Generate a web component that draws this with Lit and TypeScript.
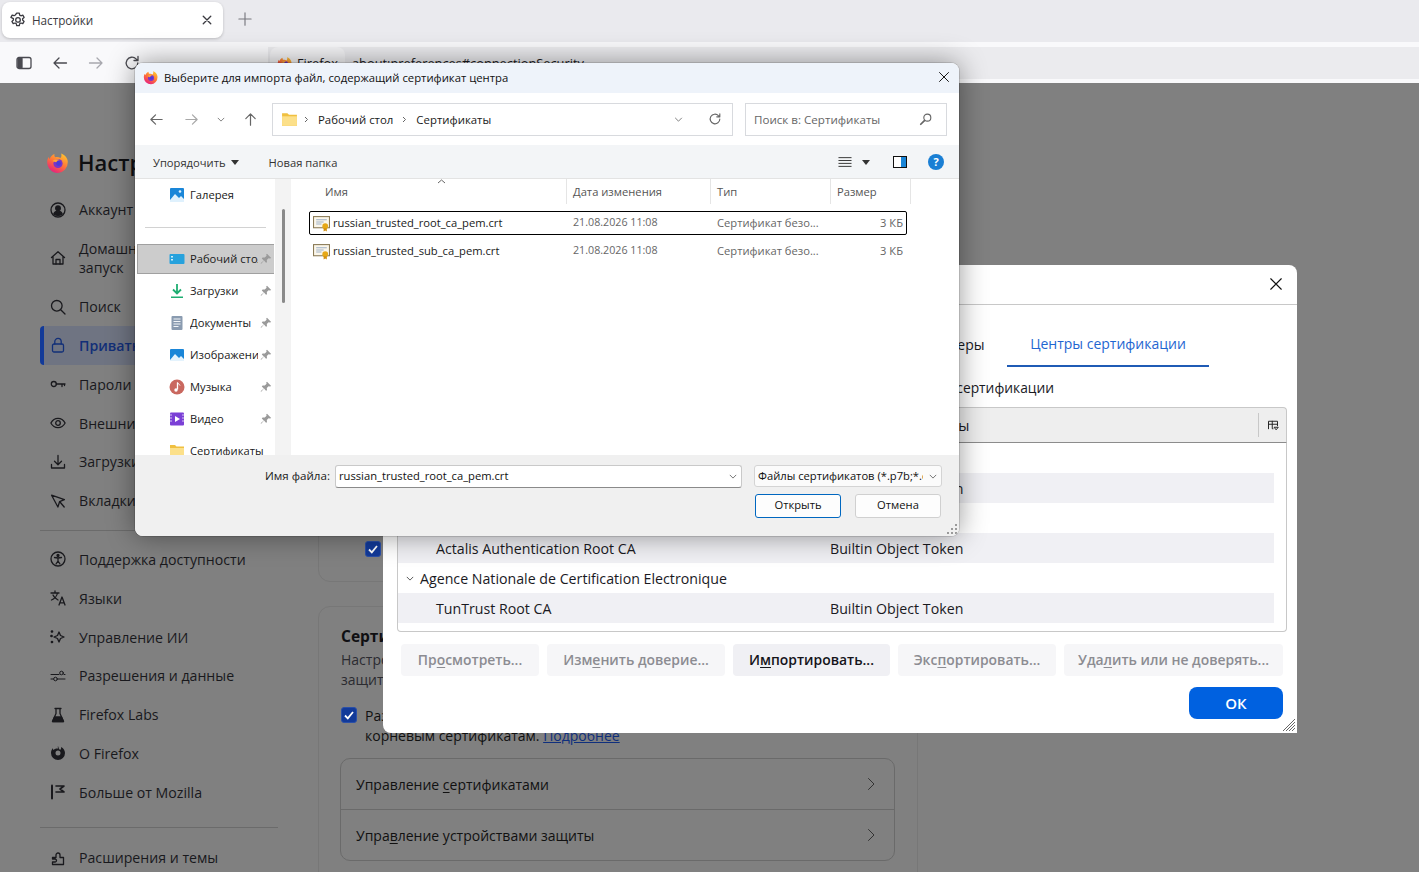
import { LitElement, html, css, svg } from "lit";
import { customElement } from "lit/decorators.js";

const ic = (body: unknown, cls = "i") =>
  html`<svg class=${cls} viewBox="0 0 16 16" fill="none" stroke="currentColor" stroke-width="1.3" stroke-linecap="round" stroke-linejoin="round">${body}</svg>`;

const fxLogo = (cls: string) => html`<svg class=${cls} viewBox="0 0 24 24">
  <defs>
    <linearGradient id="fxa" x1="0.8" y1="0" x2="0.2" y2="1"><stop offset="0" stop-color="#ffc62e"/><stop offset="0.5" stop-color="#ff7139"/><stop offset="1" stop-color="#e31587"/></linearGradient>
  </defs>
  <path fill="url(#fxa)" d="M12 23a10.8 10.8 0 0 1-10.8-11c0-2 .6-3.6 1.6-5 .1 1 .5 1.6 1 2 .6-2.400 2.400-4 4.700-5-.4 1.500 0 2.600 1 3.300 1.500-.5 3.500-.2 4.900.8 1-.8 1.300-2.500.8-4.600 3 1 6.600 4.300 6.600 8.500A10.800 10.800 0 0 1 12 23z"/>
  <circle cx="12" cy="13.500" r="4.600" fill="#7a35c8"/>
  <circle cx="12.500" cy="13.500" r="2.400" fill="#4a3bd8"/>
  <path fill="#ffa436" d="M6.500 11c2-2 5.500-2.500 7.500-1-1.800 0-3 .8-3.700 2.200-1.200-.4-2.800-.2-3.800-1.200z"/>
</svg>`;

const sideIcons: Record<string, unknown> = {
  account: svg`<circle cx="8" cy="8" r="7"/><circle cx="8" cy="6.300" r="2.300" fill="currentColor"/><path fill="currentColor" d="M3.800 12c.8-2 2.400-2.800 4.200-2.800s3.400.8 4.200 2.800c-2.200 1.800-6.200 1.800-8.400 0z"/>`,
  home: svg`<path d="M1.500 7.500 8 1.800l6.500 5.700M3 6.500V14h10V6.500"/><path d="M6 14V9.500h4V14"/>`,
  search: svg`<circle cx="6.800" cy="6.800" r="5.300"/><path d="m10.700 10.700 4.300 4.300"/>`,
  lock: svg`<rect x="2.500" y="7" width="11" height="8" rx="1.500"/><path d="M4.800 7V4.600a3.200 3.200 0 0 1 6.400 0V7"/>`,
  key: svg`<circle cx="3.800" cy="8" r="2.500"/><path d="M6.300 8H15M12 8v2.500M14.500 8v1.500"/>`,
  eye: svg`<path d="M.9 8C2.500 5 5 3.300 8 3.300S13.500 5 15.100 8c-1.600 3-4.100 4.700-7.100 4.700S2.500 11 .9 8z"/><circle cx="8" cy="8" r="2.300"/>`,
  download: svg`<path d="M8 1.500v9M4.500 7.200 8 10.700l3.500-3.500M1.500 10.500v3.500h13v-3.500"/>`,
  tabs: svg`<path d="M2 1.800 14.500 7l-5 1.800L7.500 14 2 1.800z" transform="rotate(-4 8 8)"/><path d="m10 9 4.200 5"/>`,
  access: svg`<circle cx="8" cy="8" r="7"/><circle cx="8" cy="4.500" r="1" fill="currentColor"/><path d="M4.500 6.500 8 7l3.500-.5M8 7v3l-2 3M8 10l2 3"/>`,
  lang: svg`<path d="M1 3h8M5 1v2M7.500 3C7 6 4 9 1.500 10M3 5c1 2.500 3 4 5 5"/><path d="m9 15 3-8 3 8M10 12.800h4"/>`,
  ai: svg`<path d="M9 3l1.500 3.500L14 8l-3.500 1.500L9 13 7.500 9.500 4 8l3.500-1.500z"/><circle cx="2" cy="2.500" r=".7" fill="currentColor"/><circle cx="1.500" cy="7" r=".7" fill="currentColor"/><circle cx="2" cy="13" r=".7" fill="currentColor"/>`,
  perm: svg`<path d="M1 6.500h8M14 6.500h1M1 11h2.500M8 11h7" stroke-width="1"/><circle cx="11.500" cy="5" r="1.800" stroke-width="1"/><circle cx="5.500" cy="11" r="1.800" stroke-width="1"/>`,
  labs: svg`<path d="M5 1.500h6M6 1.500v5L2.500 14.500h11L10 6.500v-5"/><path fill="currentColor" d="M4.500 10h7l2 4.500h-11z"/>`,
  about: svg`<path fill="currentColor" stroke="none" d="M8 1c-.5 1-.2 1.800.4 2.500C6 3.300 4 4 3.500 5 3 4.500 2.800 4 3 3 1.500 4.500 1 6.300 1 8a7 7 0 0 0 14 0c0-2.500-1.500-5-4-6 .4 1.500-.3 2.500-1 3-.7-.8-1.500-2-2-4zM8 5.500a2.500 2.500 0 1 1 0 5 2.500 2.500 0 0 1 0-5z"/>`,
  more: svg`<path d="M2 1.500v13" stroke-width="2"/><path d="M6 2h8L10 5l4 3H6" stroke-width="1.600"/>`,
  ext: svg`<path d="M2 7h3.500V4.500a2 2 0 0 1 4 0V7H13v7H2v-2.500h2.500a1.500 1.500 0 0 0 0-3H2z" transform="translate(.5 .5)"/>`,
};

const sideTop: [string, string][] = [
  ["account", "Аккаунт"],
  ["home", "Домашняя страница и запуск"],
  ["search", "Поиск"],
  ["lock", "Приватность и защита"],
  ["key", "Пароли"],
  ["eye", "Внешний вид"],
  ["download", "Загрузки"],
  ["tabs", "Вкладки и просмотр"],
];
const sideMid: [string, string][] = [
  ["access", "Поддержка доступности"],
  ["lang", "Языки"],
  ["ai", "Управление ИИ"],
  ["perm", "Разрешения и данные"],
  ["labs", "Firefox Labs"],
  ["about", "О Firefox"],
  ["more", "Больше от Mozilla"],
];

const navIcons: Record<string, unknown> = {
  gallery: html`<svg class="ni" viewBox="0 0 16 16"><rect x="1" y="1" width="14" height="14" rx="1" fill="#1a86d8"/><path d="M1 13 6 7l4 4 2-2 3 3v3H1z" fill="#dff1fd"/><circle cx="11" cy="4.500" r="1.300" fill="#dff1fd"/></svg>`,
  desk: html`<svg class="ni" viewBox="0 0 16 16"><rect x="0.500" y="3" width="15" height="10" rx="1" fill="#27a2dd"/><rect x="2" y="5" width="2" height="1.500" fill="#cfeefb"/><rect x="2" y="8" width="2" height="1.500" fill="#cfeefb"/></svg>`,
  dl: html`<svg class="ni" viewBox="0 0 16 16"><path d="M8 1v9M4 6.500 8 10.500l4-4" fill="none" stroke="#1fae72" stroke-width="1.800"/><rect x="2" y="13.500" width="12" height="1.500" fill="#1fae72"/></svg>`,
  doc: html`<svg class="ni" viewBox="0 0 16 16"><rect x="2.500" y="1" width="11" height="14" rx="1" fill="#8a9bb0"/><path d="M4.500 4h7M4.500 6.500h7M4.500 9h7M4.500 11.500h5" stroke="#f2f5f8" stroke-width="1"/></svg>`,
  img: html`<svg class="ni" viewBox="0 0 16 16"><rect x="1" y="2" width="14" height="12" rx="1" fill="#1a86d8"/><path d="M1 13 6 7l4 4 2-2 3 3v2H1z" fill="#e4f3fd"/></svg>`,
  music: html`<svg class="ni" viewBox="0 0 16 16"><circle cx="8" cy="8" r="7.500" fill="#c9685f"/><path d="M8.500 3.500v7" stroke="#fff" stroke-width="1.300"/><circle cx="7" cy="11" r="1.700" fill="#fff"/><path d="M8.500 3.500c.5 1.500 2 1.500 2.500 3" fill="none" stroke="#fff"/></svg>`,
  video: html`<svg class="ni" viewBox="0 0 16 16"><rect x="1" y="1.500" width="14" height="13" rx="1" fill="#7b3fd6"/><path d="M6 5v6l5-3z" fill="#fff"/><path d="M1 4h2M1 7h2M1 10h2M13 4h2M13 7h2M13 10h2" stroke="#d9c8f5"/></svg>`,
  folder: html`<svg class="ni" viewBox="0 0 16 16"><path d="M1 2h5l1.500 1.500H15V14H1z" fill="#f0c040"/><rect x="1" y="5" width="14" height="9" fill="#fce08a"/></svg>`,
};

const pin = html`<svg class="pin" viewBox="0 0 12 12"><path fill="#9a9a9a" d="M7 .8 11.200 5 10 5.600 8.600 5.200 6.800 7l.2 2.200-1 .6L4 7.600 1.200 10.800.6 10.200 3.800 7.400 1.800 5.400l.8-1L4.800 4.600 6.600 2.800 6.200 1.600z"/></svg>`;

const certIcon = html`<svg class="cert" viewBox="0 0 16 16"><rect x="0.500" y="1.500" width="15" height="10.500" fill="#fbf6ea" stroke="#8a7a55"/><path d="M3 4.500h10M3 6.500h7M3 8.500h5" stroke="#9fb1c8"/><circle cx="11.500" cy="10.500" r="2.700" fill="#e6a817"/><path d="M10 12.500V15.500l1.500-1 1.500 1V12.500" fill="#d18f10"/></svg>`;

const chevDown = html`<svg class="cd" viewBox="0 0 10 6"><path d="M1 1l4 4 4-4" fill="none" stroke="currentColor" stroke-width="1"/></svg>`;

@customElement("app-root")
export class AppRoot extends LitElement {
  static styles = css`
    :host { display: block; width: 1419px; height: 872px; position: relative; overflow: hidden; font-family: "Open Sans", "Noto Sans", sans-serif; font-size: 14px; color: #0f0f12; background: #808080; }
    svg { display: block; flex: none; }
    u { text-underline-offset: 2px; }
    .page { display: flex; flex-direction: column; height: 872px; }

    .strip { height: 42px; box-sizing: border-box; background: #eaeaee; display: flex; align-items: flex-start; padding: 2px 0 0 2px; flex: none; }
    .tab { width: 221px; height: 36px; background: #fff; border-radius: 8px; box-shadow: 0 1px 3px rgba(0,0,0,.2); display: flex; align-items: center; padding: 0 10px 0 8px; gap: 6px; font-size: 11.700px; color: #3a3a40; box-sizing: border-box; }
    .tab .i { width: 16px; height: 16px; color: #3a3a40; }
    .tab span { flex: 1; }
    .tab .x { width: 12px; height: 12px; }
    .plus { margin: 10px 0 0 15px; width: 14px; height: 14px; color: #77777d; }

    .bar { height: 41px; flex: none; background: #f9f9fb; display: flex; align-items: center; padding: 0 0 0 16px; }
    .bar .i { width: 16px; height: 16px; color: #4a4a50; }
    .tools { display: grid; grid-template-columns: 36px 36px 36px; width: 216px; align-items: center; }
    .bar .tools .f { color: #a8a8ae; }
    .bar .side-toggle { margin-right: 20px; }
    .urlbar { flex: 1; height: 32px; background: #ebebee; display: flex; align-items: center; gap: 7px; padding-left: 2px; font-size: 12.800px; color: #1a1a1f; white-space: nowrap; }
    .pill { width: 75px; height: 32px; box-sizing: border-box; padding: 0 0 0 7px; background: #f4f4f6; border-radius: 8px; display: flex; align-items: center; gap: 4px; }
    .fxs { width: 16px; height: 16px; }

    .content { flex: 1; min-height: 0; display: flex; overflow: hidden; background: #808080; }
    .side { width: 238px; margin: 0 40px; flex: none; }
    .brand { height: 44px; margin-top: 57px; display: flex; align-items: center; gap: 8px; padding-left: 6px; font-size: 22px; font-weight: 600; color: #0f0f12; white-space: nowrap; }
    .fxb { width: 24px; height: 24px; }
    .menu { display: flex; flex-direction: column; margin-top: 6.500px; }
    .mi { min-height: 38.800px; box-sizing: border-box; display: flex; align-items: center; gap: 13px; padding-left: 10px; font-size: 14.150px; line-height: 19px; color: #19191d; }
    .mi .i { width: 16px; height: 16px; }
    .mi.two { min-height: 58px; }
    .mi.on { color: #122f78; font-weight: 600; background: #6f7482; border-left: 4px solid #123a99; border-radius: 4px; padding-left: 6px; }
    .sep { height: 1px; background: #6b6b6b; margin: 10px 0 9px; }
    .sep.b { margin: 15px 0 10.500px; }

    .main { width: 600px; flex: none; display: flex; flex-direction: column; gap: 24px; }
    .card { border: 1px solid #777; border-radius: 12px; box-sizing: border-box; flex: none; }
    .c1 { height: 382px; margin-top: 117px; display: flex; align-items: flex-end; padding: 0 0 24px 46px; }
    .cb { width: 16px; height: 16px; background: #123a99; border-radius: 3px; display: flex; align-items: center; justify-content: center; flex: none; border: 1px solid #2a4fa8; box-sizing: border-box; }
    .cb svg { width: 12px; height: 12px; color: #fff; }
    .c2 { padding: 18px 22px 0 22px; height: 300px; }
    .c2 h2 { margin: 0; font-size: 15.500px; font-weight: 700; line-height: 22px; color: #0f0f12; white-space: nowrap; }
    .c2 p { margin: 3px 0 0; color: #2b2b30; line-height: 20px; font-size: 14px; white-space: nowrap; }
    .opt { display: flex; gap: 8px; margin-top: 17px; line-height: 20px; white-space: nowrap; }
    .opt div:last-child { color: #111; margin-top: -1px; }
    .opt a { color: #0f2f7d; text-decoration: underline; }
    .links { margin: 12px 0 0 -1px; border: 1px solid #6a6a6a; border-radius: 10px; width: 555px; box-sizing: border-box; }
    .lnk { height: 50px; display: flex; align-items: center; justify-content: space-between; padding: 0 15px; color: #111; }
    .lnk + .lnk { border-top: 1px solid #6a6a6a; }
    .lnk svg { width: 16px; height: 16px; color: #333; }

    /* certificate manager window */
    .mgr { position: absolute; left: 383px; top: 265px; width: 914px; height: 468px; background: #fff; border-radius: 8px 8px 0 8px; display: flex; flex-direction: column; }
    .mgr-title { height: 40px; box-sizing: border-box; border-bottom: 1px solid #c8c8c8; display: flex; justify-content: flex-end; align-items: center; padding: 0 14px 2px 0; flex: none; }
    .mgr-title svg { width: 14px; height: 14px; color: #111; }
    .tabs { height: 62px; display: flex; justify-content: flex-end; align-items: flex-end; padding-right: 88px; flex: none; color: #1a1a1f; white-space: nowrap; font-size: 14px; overflow: hidden; box-sizing: border-box; }
    .t { height: 44px; display: flex; align-items: center; padding: 0 22.500px 2px; box-sizing: border-box; }
    .t.on { color: #1f66d1; border-bottom: 2px solid #1f5bb5; width: 202px; justify-content: center; padding: 0 0 2px; }
    .lead { margin-top: 9.500px; height: 21px; padding-right: 243px; text-align: right; line-height: 21px; color: #1a1a1f; white-space: nowrap; flex: none; font-size: 13.800px; }
    .tbl { margin: 9.500px 10px 0 14px; flex: none; }
    .th { height: 36px; box-sizing: border-box; background: #eeeeee; border: 1px solid #c8c8c8; border-bottom-color: #8c8c8c; border-radius: 4px 4px 0 0; display: grid; grid-template-columns: 432px 1fr 28px; align-items: center; color: #1a1a1f; font-size: 14.500px; }
    .th > :first-child { padding-left: 22px; }
    .th .pk { height: 24px; border-left: 1px solid #c8c8c8; display: flex; align-items: center; justify-content: center; }
    .pk svg { width: 12px; height: 12px; color: #222; }
    .tb { height: 189px; box-sizing: border-box; border: 1px solid #c8c8c8; border-top: 0; border-radius: 0 0 4px 4px; padding: 0 12px 0 0; overflow: hidden; color: #1a1a1f; font-size: 14.200px; }
    .tr { height: 30px; display: grid; grid-template-columns: 432px 1fr; align-items: center; white-space: nowrap; }
    .tr.g { display: flex; gap: 6px; padding-left: 8px; }
    .tr.g .cd { width: 8px; height: 5px; color: #333; }
    .tr.s { background: #f0f0f4; }
    .tr.s > :first-child { padding-left: 38px; }
    .acts { display: grid; grid-template-columns: 138px 178px 157px 158px 219px; column-gap: 8px; padding-left: 18px; margin-top: 12px; flex: none; }
    .btn { height: 32px; box-sizing: border-box; padding-bottom: 2px; border-radius: 4px; background: #f6f6f8; color: #8c8c92; font-weight: 600; font-size: 13.900px; display: flex; align-items: center; justify-content: center; white-space: nowrap; }
    .btn.en { background: #f0f0f4; color: #15141a; }
    .okrow { display: flex; justify-content: flex-end; padding-right: 14px; margin-top: 11px; flex: none; }
    .ok { width: 94px; height: 32px; border-radius: 8px; background: #0061e0; color: #fff; font-weight: 600; font-size: 15px; display: flex; align-items: center; justify-content: center; }
    .mgrip { position: absolute; right: 1px; bottom: 1px; width: 14px; height: 14px; }

    /* windows file dialog */
    .dlg { position: absolute; left: 135px; top: 63px; width: 824px; height: 473px; background: #fff; border-radius: 8px; box-shadow: 0 0 28px rgba(0,0,0,.42), 0 0 0 1px rgba(0,0,0,.12); display: grid; grid-template-rows: 30px 52px 34px 276px 81px; font-size: 11.200px; color: #1a1a1a; overflow: hidden; }
    .dt { background: #eef3fa; display: flex; align-items: center; padding: 0 9px 2px 8px; gap: 5px; font-size: 11.300px; color: #111; box-sizing: border-box; }
    .dt span { flex: 1; }
    .dt .x { width: 12px; height: 12px; color: #111; }
    .dnav { display: flex; align-items: center; padding-left: 4px; }
    .dnb { display: grid; grid-template-columns: 35px 35px 24px 34px; justify-items: center; align-items: center; width: 128px; margin-right: 5px; color: #666; }
    .dnb .ar { width: 15px; height: 15px; }
    .dnb .f { color: #a8a8a8; }
    .dnb .cd { width: 8px; height: 5px; }
    .addr { width: 461px; height: 33px; border: 1px solid #d8dade; box-sizing: border-box; display: flex; align-items: center; padding: 0 10px 0 8px; gap: 5px; color: #1a1a1a; font-size: 11.400px; }
    .addr .ni { width: 17px; height: 17px; margin-right: -3px; }
    .addr .gt { width: 5px; height: 7px; color: #666; margin: 0 4px; }
    .addr .sp { flex: 1; }
    .addr .cd { width: 9px; height: 5px; color: #666; margin-right: 20px; }
    .addr .rf { width: 14px; height: 14px; color: #666; }
    .srch { width: 202px; height: 33px; margin-left: 12px; border: 1px solid #d8dade; box-sizing: border-box; display: flex; align-items: center; justify-content: space-between; padding: 0 13px 0 8px; color: #666; font-size: 11.600px; }
    .srch svg { width: 14px; height: 14px; color: #666; }
    .cmd { background: #f3f5f7; border-bottom: 1px solid #e3e3e3; display: flex; align-items: center; padding: 1px 15px 0 18px; color: #333; box-sizing: border-box; }
    .cmd .dn { width: 8px; height: 5px; margin-left: 5px; color: #333; }
    .cmd .np { margin-left: 30px; flex: 1; }
    .cmd .v { width: 14px; height: 14px; color: #222; }
    .cmd .dn2 { margin: 0 23px 0 10px; }
    .cmd .pn { width: 14px; height: 12px; margin-right: 21px; }
    .cmd .hp { width: 16px; height: 16px; }
    .dbody { display: flex; min-height: 0; overflow: hidden; }
    .dside { width: 140px; flex: none; overflow: hidden; }
    .ditem { height: 32px; display: flex; align-items: center; padding-left: 34px; gap: 5px; white-space: nowrap; box-sizing: border-box; }
    .ditem .ni { width: 16px; height: 16px; }
    .ditem span { width: 68px; overflow: hidden; flex: none; color: #1a1a1a; margin-top: 0; line-height: 16px; }
    .ditem.wide span { width: auto; }
    .ditem .pin { width: 12px; height: 12px; margin-left: -3px; }
    .ditem.sel { height: 30px; margin: 1px 1px 1px 2px; background: #cccccc; border: 1px solid #a0a0a0; border-right: 0; padding-left: 31px; }
    .dsep { height: 32px; display: flex; align-items: center; }
    .dsep i { display: block; width: 121px; height: 1px; margin-left: 10px; background: #d2d2d2; }
    .gut { width: 16px; flex: none; background: #f3f3f3; padding: 30px 0 0 7px; box-sizing: border-box; }
    .gut i { display: block; width: 3px; height: 94px; border-radius: 2px; background: #8a8a8a; }
    .list { flex: 1; position: relative; }
    .lh { height: 25px; display: grid; grid-template-columns: 276px 144px 120px 80px; width: 620px; color: #555; }
    .lh div { display: flex; align-items: center; padding-left: 6px; border-right: 1px solid #e5e5e5; box-sizing: border-box; }
    .lh div:first-child { padding-left: 34px; }
    .caret { position: absolute; left: 146px; top: 0; width: 9px; height: 5px; color: #666; }
    .rows { padding: 7px 0 0 18px; display: flex; flex-direction: column; gap: 4px; }
    .row { width: 598px; height: 24px; box-sizing: border-box; padding-bottom: 3px; display: grid; grid-template-columns: 263px 144px 1fr 60px; align-items: center; border: 1px solid transparent; border-radius: 2px; color: #666; white-space: nowrap; }
    .row.sel { border-color: #000; }
    .row .nm { display: flex; align-items: center; gap: 3px; padding-left: 3px; color: #1a1a1a; }
    .row .dtm { font-size: 10.700px; }
    .cert { width: 17px; height: 17px; margin-top: 3px; }
    .row .sz { text-align: right; padding-right: 3px; }
    .dfoot { background: #f0f0f0; position: relative; padding-top: 10px; box-sizing: border-box; }
    .fr { display: flex; align-items: flex-start; }
    .fr label { width: 195px; text-align: right; line-height: 21px; color: #1a1a1a; font-size: 11.600px; }
    .inp { width: 407px; height: 23px; margin-left: 5px; box-sizing: border-box; background: #fff; border: 1px solid #c9c9c9; border-bottom-color: #8a8a8a; border-radius: 3px; display: flex; align-items: center; justify-content: space-between; padding: 0 4px 2px 3px; color: #111; }
    .inp .cd { width: 8px; height: 5px; color: #555; margin-top: 2px; }
    .flt { width: 188px; height: 22px; margin-left: 12px; box-sizing: border-box; background: #fbfbfb; border: 1px solid #d4d4d4; border-radius: 3px; display: flex; align-items: center; justify-content: space-between; padding: 0 4px 1px 3px; white-space: nowrap; overflow: hidden; color: #111; }
    .flt span { overflow: hidden; width: 165px; }
    .flt .cd { width: 8px; height: 5px; color: #555; margin-top: 1px; }
    .fb { display: flex; justify-content: flex-end; gap: 14px; padding-right: 18px; margin-top: 6px; }
    .db { width: 86px; height: 24px; box-sizing: border-box; background: #fdfdfd; border: 1px solid #d0d0d0; border-radius: 3px; display: flex; align-items: center; justify-content: center; padding-bottom: 3px; color: #111; }
    .db.pri { border: 1.500px solid #0067c0; }
    .grip { position: absolute; right: 1px; bottom: 1px; width: 12px; height: 12px; }
  `;

  private side(items: [string, string][]) {
    return items.map(
      ([k, label]) => html`<div class="mi ${k === "home" ? "two" : ""} ${k === "lock" ? "on" : ""}">${ic(sideIcons[k])}<span>${label}</span></div>`
    );
  }

  private renderPage() {
    const chevR = ic(svg`<path d="m5.500 2.500 5.500 5.500-5.500 5.500" stroke-width="1"/>`);
    return html`<div class="page">
      <div class="strip">
        <div class="tab">
          ${ic(svg`<path d="M6.700 1.200h2.600l.4 1.900 1.200.7 1.900-.6 1.300 2.200-1.500 1.300v1.400l1.500 1.300-1.300 2.200-1.900-.6-1.200.7-.4 1.900H6.700l-.4-1.900-1.200-.7-1.900.6-1.300-2.200 1.500-1.300V6.600L.9 5.300l1.300-2.200 1.900.6 1.200-.7z"/><circle cx="8" cy="7.900" r="2.300"/>`)}
          <span>Настройки</span>
          ${ic(svg`<path d="m3 3 10 10M13 3 3 13" stroke-width="1.800"/>`, "x")}
        </div>
        ${ic(svg`<path d="M8 1v14M1 8h14"/>`, "plus")}
      </div>
      <div class="bar">
        ${ic(svg`<rect x="1" y="2.500" width="14" height="11" rx="2"/><path fill="currentColor" d="M2 3.500h4v9H2z"/>`, "i side-toggle")}
        <div class="tools">
          ${ic(svg`<path d="M14.500 8H2M7 3 2 8l5 5"/>`)}
          ${ic(svg`<path d="M1.500 8H14M9 3l5 5-5 5"/>`, "i f")}
          ${ic(svg`<path d="M13.800 8a5.800 5.800 0 1 1-1.700-4.100L14 5.500M14 1.500v4h-4"/>`)}
        </div>
        <div class="urlbar">
          <div class="pill">${fxLogo("fxs")}<span>Firefox</span></div>
          <span>about:preferences#connectionSecurity</span>
        </div>
      </div>
      <div class="content">
        <div class="side">
          <div class="brand">${fxLogo("fxb")}<span>Настройки</span></div>
          <div class="menu">
            ${this.side(sideTop)}
            <div class="sep"></div>
            ${this.side(sideMid)}
            <div class="sep b"></div>
            ${this.side([["ext", "Расширения и темы"]])}
          </div>
        </div>
        <div class="main">
          <div class="card c1"><div class="cb">${this.tick()}</div></div>
          <div class="card c2">
            <h2>Сертификаты</h2>
            <p>Настройте, какие сертификаты использовать для вашей<br />защиты при посещении сайтов</p>
            <div class="opt">
              <div class="cb">${this.tick()}</div>
              <div>Разрешать Firefox автоматически доверять сторонним<br />корневым сертификатам. <a>Подробнее</a></div>
            </div>
            <div class="links">
              <div class="lnk"><span>Управление <u>с</u>ертификатами</span>${chevR}</div>
              <div class="lnk"><span>Упра<u>в</u>ление устройствами защиты</span>${chevR}</div>
            </div>
          </div>
        </div>
      </div>
    </div>`;
  }

  private tick() {
    return html`<svg viewBox="0 0 12 12" fill="none" stroke="currentColor" stroke-width="1.800"><path d="m2 6.500 2.800 2.800L10 3"/></svg>`;
  }

  private renderMgr() {
    const rows = [
      ["g", "AC Camerfirma S.A.", ""],
      ["s", "Chambers of Commerce Root - 2008", "Builtin Object Token"],
      ["g", "ACCV", ""],
      ["s", "Actalis Authentication Root CA", "Builtin Object Token"],
      ["g", "Agence Nationale de Certification Electronique", ""],
      ["s", "TunTrust Root CA", "Builtin Object Token"],
    ];
    return html`<div class="mgr">
      <div class="mgr-title">${ic(svg`<path d="m2 2 12 12M14 2 2 14"/>`, "x")}</div>
      <div class="tabs">
        <div class="t">Ваши сертификаты</div>
        <div class="t">Решения для аутентификации</div>
        <div class="t">Люди</div>
        <div class="t">Серверы</div>
        <div class="t on">Центры сертификации</div>
      </div>
      <div class="lead">У вас хранятся сертификаты, идентифицирующие следующие центры сертификации</div>
      <div class="tbl">
        <div class="th">
          <div>Имя сертификата</div>
          <div>Устройство защиты</div>
          <div class="pk">${ic(svg`<path d="M2 13V3h12v6M2 7h12M7 3v10h1M10 11h5l-2.500 3z"/>`)}</div>
        </div>
        <div class="tb">
          ${rows.map(([k, a, b]) =>
            k === "g"
              ? html`<div class="tr g">${chevDown}<span>${a}</span></div>`
              : html`<div class="tr s"><span>${a}</span><span>${b}</span></div>`
          )}
        </div>
      </div>
      <div class="acts">
        <div class="btn">Пр<u>о</u>смотреть...</div>
        <div class="btn">Изм<u>е</u>нить доверие...</div>
        <div class="btn en">И<u>м</u>портировать...</div>
        <div class="btn">Экс<u>п</u>ортировать...</div>
        <div class="btn">Уда<u>л</u>ить или не доверять...</div>
      </div>
      <div class="okrow"><div class="ok">ОК</div></div>
      <svg class="mgrip" viewBox="0 0 14 14" stroke="#666" fill="none"><path d="M13 1 1 13M13 4 4 13M13 7 7 13M13 10l-3 3"/></svg>
    </div>`;
  }

  private renderDlg() {
    const arrow = (d: string, cls = "ar") => ic(svg`<path d=${d}/>`, cls);
    const gt = html`<svg class="gt" viewBox="0 0 5 7"><path d="m1 1 2.500 2.500L1 6" fill="none" stroke="currentColor"/></svg>`;
    const nav: [string, string, boolean][] = [
      ["desk", "Рабочий стол", true],
      ["dl", "Загрузки", true],
      ["doc", "Документы", true],
      ["img", "Изображения", true],
      ["music", "Музыка", true],
      ["video", "Видео", true],
      ["folder", "Сертификаты", false],
    ];
    const files = ["russian_trusted_root_ca_pem.crt", "russian_trusted_sub_ca_pem.crt"];
    return html`<div class="dlg">
      <div class="dt">
        ${fxLogo("fxs")}
        <span>Выберите для импорта файл, содержащий сертификат центра</span>
        ${ic(svg`<path d="m2 2 12 12M14 2 2 14"/>`, "x")}
      </div>
      <div class="dnav">
        <div class="dnb">
          ${arrow("M14 8H2M7 3 2 8l5 5")}
          ${arrow("M2 8h12M9 3l5 5-5 5", "ar f")}
          ${chevDown}
          ${arrow("M8 14V2M3 7l5-5 5 5")}
        </div>
        <div class="addr">
          ${navIcons.folder}
          ${gt}
          <span>Рабочий стол</span>
          ${gt}
          <span>Сертификаты</span>
          <span class="sp"></span>
          ${chevDown}
          ${ic(svg`<path d="M13.500 8a5.500 5.500 0 1 1-1.600-3.900L13.500 5.500M13.500 2v3.500H10"/>`, "rf")}
        </div>
        <div class="srch">
          <span>Поиск в: Сертификаты</span>
          ${ic(svg`<circle cx="9.500" cy="6.500" r="4"/><path d="M6.500 9.500 2 14" stroke-width="2"/>`)}
        </div>
      </div>
      <div class="cmd">
        <span>Упорядочить</span>
        <svg class="dn" viewBox="0 0 8 5"><path d="M0 0h8L4 5z" fill="currentColor"/></svg>
        <span class="np">Новая папка</span>
        ${ic(svg`<path d="M1 3h14M1 6.300h14M1 9.600h14M1 13h14" stroke-width="1"/>`, "v")}
        <svg class="dn dn2" viewBox="0 0 8 5"><path d="M0 0h8L4 5z" fill="currentColor"/></svg>
        <svg class="pn" viewBox="0 0 14 12"><rect x=".5" y=".5" width="13" height="11" fill="#fff" stroke="#111"/><rect x="8" y="1" width="5" height="10" fill="#1a86d8"/></svg>
        <svg class="hp" viewBox="0 0 16 16"><circle cx="8" cy="8" r="8" fill="#1a7fd4"/><text x="8" y="12" text-anchor="middle" font-size="11" font-weight="700" fill="#fff" font-family="Open Sans, sans-serif">?</text></svg>
      </div>
      <div class="dbody">
        <div class="dside">
          <div class="ditem">${navIcons.gallery}<span>Галерея</span></div>
          <div class="dsep"><i></i></div>
          ${nav.map(
            ([k, t, p], i) => html`<div class="ditem ${i === 0 ? "sel" : ""} ${p ? "" : "wide"}">${navIcons[k]}<span>${t}</span>${p ? pin : ""}</div>`
          )}
        </div>
        <div class="gut"><i></i></div>
        <div class="list">
          <div class="lh"><div>Имя</div><div>Дата изменения</div><div>Тип</div><div>Размер</div></div>
          <svg class="caret" viewBox="0 0 9 5"><path d="m1 4 3.500-3L8 4" fill="none" stroke="currentColor"/></svg>
          <div class="rows">
            ${files.map(
              (f, i) => html`<div class="row ${i === 0 ? "sel" : ""}">
                <div class="nm">${certIcon}<span>${f}</span></div>
                <div class="dtm">21.08.2026 11:08</div>
                <div>Сертификат безо...</div>
                <div class="sz">3 КБ</div>
              </div>`
            )}
          </div>
        </div>
      </div>
      <div class="dfoot">
        <div class="fr">
          <label>Имя файла:</label>
          <div class="inp"><span>russian_trusted_root_ca_pem.crt</span>${chevDown}</div>
          <div class="flt"><span>Файлы сертификатов (*.p7b;*.crt)</span>${chevDown}</div>
        </div>
        <div class="fb"><div class="db pri">Открыть</div><div class="db">Отмена</div></div>
        <svg class="grip" viewBox="0 0 12 12" fill="#9a9a9a"><rect x="9" y="9" width="2" height="2"/><rect x="5" y="9" width="2" height="2"/><rect x="1" y="9" width="2" height="2"/><rect x="9" y="5" width="2" height="2"/><rect x="5" y="5" width="2" height="2"/><rect x="9" y="1" width="2" height="2"/></svg>
      </div>
    </div>`;
  }

  render() {
    return html`${this.renderPage()}${this.renderMgr()}${this.renderDlg()}`;
  }
}
